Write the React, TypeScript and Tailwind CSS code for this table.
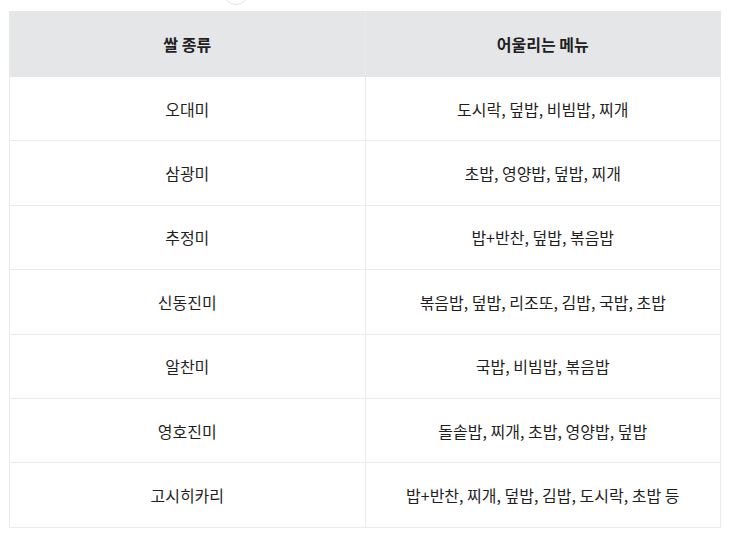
const rows: [string, string][] = [
  ["오대미", "도시락, 덮밥, 비빔밥, 찌개"],
  ["삼광미", "초밥, 영양밥, 덮밥, 찌개"],
  ["추정미", "밥+반찬, 덮밥, 볶음밥"],
  ["신동진미", "볶음밥, 덮밥, 리조또, 김밥, 국밥, 초밥"],
  ["알찬미", "국밥, 비빔밥, 볶음밥"],
  ["영호진미", "돌솥밥, 찌개, 초밥, 영양밥, 덮밥"],
  ["고시히카리", "밥+반찬, 찌개, 덮밥, 김밥, 도시락, 초밥 등"],
];

export default function App() {
  return (
    <div
      className="relative min-h-[545px] w-[737px] bg-white pt-[11px] pl-[9px] text-[16px] text-[#1f1f1f]"
      style={{ fontFamily: '"Noto Sans CJK KR", "Noto Sans", sans-serif' }}
    >
      <svg className="absolute left-[222px] top-[-22px]" width="28" height="28" viewBox="0 0 28 28">
        <circle cx="14" cy="14" r="12.5" fill="white" stroke="#e3e3e3" strokeWidth="1" />
      </svg>
      <table className="w-[712px] table-fixed border-collapse">
        <thead>
          <tr className="bg-[#e5e6e8]">
            <th className="h-[65px] w-1/2 border border-[#e5e6e8] border-r-[#eaeaea] p-0 text-center font-bold">쌀 종류</th>
            <th className="h-[65px] w-1/2 border border-[#e5e6e8] p-0 text-center font-bold">어울리는 메뉴</th>
          </tr>
        </thead>
        <tbody>
          {rows.map(([rice, menu]) => (
            <tr key={rice}>
              <td className="h-[64.4px] border border-[#ebebeb] p-0 text-center">{rice}</td>
              <td className="h-[64.4px] border border-[#ebebeb] p-0 text-center">{menu}</td>
            </tr>
          ))}
        </tbody>
      </table>
    </div>
  );
}
